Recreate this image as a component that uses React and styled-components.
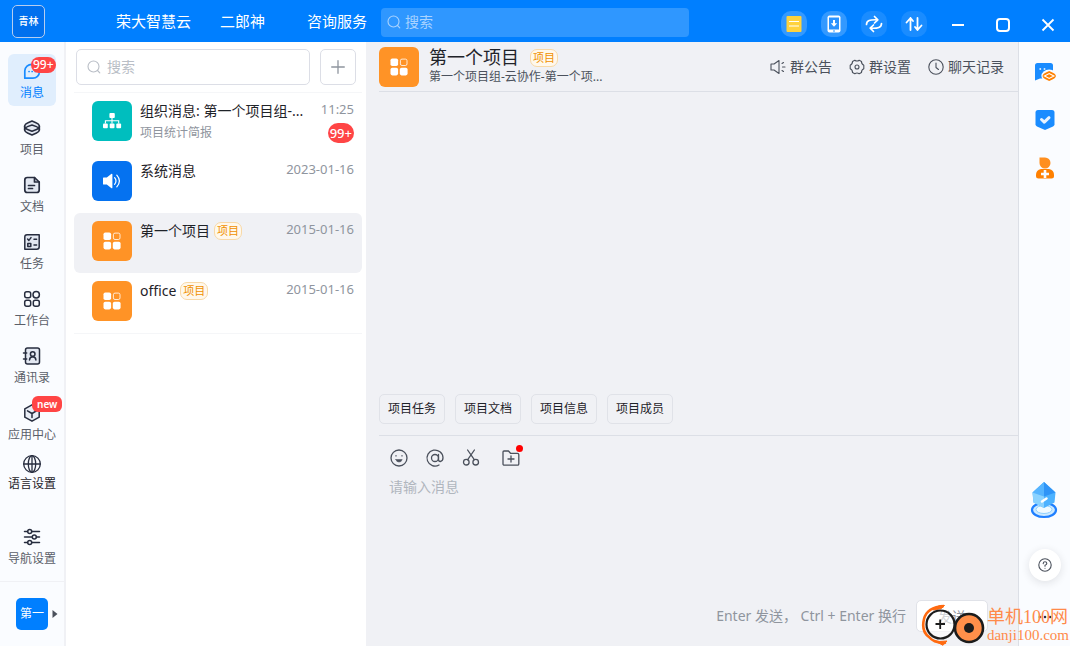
import React, { useState } from 'react';
import styled, { createGlobalStyle } from 'styled-components';

const GlobalStyle = createGlobalStyle`
    * {
        box-sizing: border-box;
    }
    body {
        margin: 0;
        overflow: hidden;
        font-family: "Noto Sans", "Noto Sans CJK SC", sans-serif;
        font-size: 14px;
        color: #1f2329;
    }
    button, input, textarea {
        font-family: inherit;
        margin: 0;
    }
    svg {
        display: block;
        flex-shrink: 0;
    }
`;

const Page = styled.div`
    display: flex;
    flex-direction: column;
    height: 100vh;
    background-color: #f0f1f5;
`;

/* top bar */

const Header = styled.header`
    display: flex;
    align-items: center;
    height: 42px;
    flex-shrink: 0;
    padding-left: 12px;
    background-color: #007fff;
`;

const Logo = styled.div`
    display: flex;
    align-items: center;
    justify-content: center;
    width: 33px;
    height: 33px;
    margin-right: 71px;
    border: 1px solid #b5cdf0;
    border-radius: 5px;
    background-color: #0070ee;
    color: white;
    font-size: 10px;
    font-weight: 500;
    line-height: 14px;
`;

const HeaderNav = styled.nav`
    display: flex;
    gap: 29px;
    margin-right: 42px;
`;

const HeaderLink = styled.a`
    color: white;
    font-size: 15px;
    line-height: 20px;
    text-decoration: none;
    white-space: nowrap;
`;

const HeaderSearch = styled.label`
    display: flex;
    align-items: center;
    gap: 4px;
    flex: 0 1 308px;
    height: 29px;
    margin: 2px auto 0 14px;
    padding: 0 6px;
    border-radius: 4px;
    background-color: #2f97ff;
    color: #a9d3ff;
`;

const SearchInput = styled.input`
    flex: 1;
    min-width: 0;
    padding: 0;
    border: none;
    outline: none;
    background-color: transparent;
    color: inherit;
    font-size: 14px;
    line-height: 20px;
    &::placeholder {
        color: inherit;
        opacity: 1;
    }
`;

const HeaderTools = styled.div`
    display: flex;
    gap: 14px;
    margin: 6px 8px 0 0;
`;

const RoundBtn = styled.button`
    display: flex;
    align-items: center;
    justify-content: center;
    width: 26px;
    height: 26px;
    padding: 0;
    border: none;
    border-radius: 10px;
    cursor: pointer;
    background-color: ${props => props.$bright ? '#3399ff' : '#1a8cff'};
`;

const WindowBtn = styled.button`
    display: flex;
    align-items: center;
    justify-content: center;
    width: 45px;
    height: 26px;
    margin-top: 8px;
    padding: 0;
    border: none;
    cursor: pointer;
    background-color: transparent;
`;

const Body = styled.div`
    display: flex;
    flex: 1;
    min-height: 0;
`;

/* left rail */

const Rail = styled.nav`
    display: flex;
    flex-direction: column;
    align-items: center;
    width: 66px;
    flex-shrink: 0;
    padding-top: 12px;
    border-right: 2px solid #f0f1f5;
    background-color: #fafcff;
`;

const RailGroup = styled.div`
    display: flex;
    flex-direction: column;
    gap: 5px;
`;

const RailItem = styled.button`
    position: relative;
    display: flex;
    flex-direction: column;
    align-items: center;
    gap: ${props => props.$compact ? '1px' : '3px'};
    width: 48px;
    height: 52px;
    padding: ${props => props.$compact ? '6px' : '7px'} 0 0;
    border: none;
    border-radius: 6px;
    cursor: pointer;
    font-size: 12px;
    line-height: 18px;
    white-space: nowrap;
    background-color: ${props => props.$active ? '#e0eefd' : 'transparent'};
    color: ${props => props.$active ? '#007fff' : props.$compact ? '#1f2329' : '#5a5f69'};
    svg {
        color: ${props => props.$active ? '#1a8cff' : '#272d3f'};
    }
`;

const RailSpacer = styled.div`
    flex: 1;
`;

const Badge = styled.span`
    padding: 0 2px;
    border-radius: 10px;
    background-color: #ff4545;
    color: white;
    font-size: 12px;
    font-weight: 500;
    line-height: 16px;
`;

const RailBadge = styled(Badge)`
    position: absolute;
    top: 3px;
    left: 23px;
`;

const NewBadge = styled(Badge)`
    position: absolute;
    top: 0;
    left: 24px;
    padding: 0 5px;
    border-radius: 6px;
    font-size: 10px;
    font-weight: 600;
`;

const RailFooter = styled.div`
    display: flex;
    align-items: center;
    gap: 4px;
    width: 100%;
    margin-top: 9px;
    padding: 16px 0 16px 16px;
    border-top: 1px solid #f0f1f5;
`;

const UserBtn = styled.button`
    width: 32px;
    height: 32px;
    padding: 0;
    border: none;
    border-radius: 5px;
    background-color: #007fff;
    color: white;
    font-size: 12px;
    line-height: 18px;
`;

/* conversation list */

const ListPanel = styled.section`
    display: flex;
    flex-direction: column;
    width: 300px;
    flex-shrink: 0;
    padding: 7px 4px 0 8px;
    background-color: white;
`;

const ListTop = styled.div`
    display: flex;
    gap: 10px;
    padding: 0 6px 7px 2px;
    border-bottom: 1px solid #f5f6f8;
`;

const ListSearch = styled.label`
    display: flex;
    align-items: center;
    gap: 6px;
    flex: 1;
    min-width: 0;
    height: 36px;
    padding: 0 10px;
    border: 1px solid #dcdee6;
    border-radius: 5px;
    color: #b9bec6;
`;

const AddBtn = styled.button`
    display: flex;
    align-items: center;
    justify-content: center;
    width: 36px;
    height: 36px;
    flex-shrink: 0;
    padding: 0;
    border: 1px solid #dcdee6;
    border-radius: 5px;
    background-color: white;
    color: #8f959e;
`;

const ChatList = styled.ul`
    margin: 0;
    padding: 0;
    list-style: none;
    border-bottom: 1px solid #f5f6f8;
`;

const ChatRow = styled.li`
    display: flex;
    gap: 8px;
    height: 60px;
    padding: 8px 8px 0 18px;
    border-radius: 6px;
    background-color: ${props => props.$active ? '#f0f1f5' : 'transparent'};
`;

const Avatar = styled.div`
    display: flex;
    align-items: center;
    justify-content: center;
    width: 40px;
    height: 40px;
    flex-shrink: 0;
    border-radius: 6px;
    color: white;
    background-color: ${props => props.$color};
`;

const ChatInfo = styled.div`
    flex: 1;
    min-width: 0;
`;

const ChatTitle = styled.div`
    display: flex;
    align-items: center;
    gap: 4px;
    height: 20px;
    line-height: 20px;
    white-space: nowrap;
`;

const ChatDesc = styled.div`
    margin-top: 2px;
    color: #8f959e;
    font-size: 12px;
    line-height: 20px;
`;

const ChatMeta = styled.div`
    display: flex;
    flex-direction: column;
    align-items: flex-end;
    gap: 6px;
    color: #8f959e;
    font-size: 13px;
    line-height: 16px;
`;

const CountBadge = styled(Badge)`
    font-size: 13px;
    line-height: 20px;
`;

const Tag = styled.span`
    flex-shrink: 0;
    padding: 0 2px;
    border: 1px solid #f8d9a8;
    border-radius: 7px;
    background-color: #fff8ec;
    color: #f09000;
    font-size: 11px;
    line-height: 16px;
`;

/* chat */

const Chat = styled.main`
    display: flex;
    flex-direction: column;
    flex: 1;
    min-width: 0;
    padding-left: 13px;
    border-right: 1px solid #dcdfe6;
`;

const ChatHeader = styled.div`
    display: flex;
    gap: 10px;
    height: 50px;
    flex-shrink: 0;
    padding: 5px 14px 0 0;
    border-bottom: 1px solid #dcdfe6;
`;

const ChatHeading = styled.div`
    flex: 1;
    min-width: 0;
`;

const ChatName = styled.h1`
    display: flex;
    align-items: center;
    gap: 11px;
    margin: 0;
    font-size: 18px;
    font-weight: normal;
    line-height: 21px;
    white-space: nowrap;
`;

const ChatPath = styled.div`
    color: #4b515c;
    font-size: 12px;
    line-height: 18px;
    white-space: nowrap;
`;

const ChatActions = styled.div`
    display: flex;
    align-items: center;
    gap: 17px;
    height: 40px;
`;

const TextBtn = styled.button`
    display: flex;
    align-items: center;
    gap: 4px;
    padding: 0;
    border: none;
    cursor: pointer;
    background-color: transparent;
    color: #4b515c;
    font-size: 14px;
    line-height: 20px;
    white-space: nowrap;
`;

const Messages = styled.div`
    flex: 1;
    min-height: 0;
`;

const QuickBar = styled.div`
    display: flex;
    gap: 10px;
    padding-bottom: 11px;
    border-bottom: 1px solid #dcdfe6;
`;

const QuickBtn = styled.button`
    height: 30px;
    padding: 0 8px;
    border: 1px solid #e0e2e8;
    border-radius: 5px;
    background-color: transparent;
    color: #1f2329;
    font-size: 12px;
    line-height: 18px;
`;

const Editor = styled.div`
    display: flex;
    flex-direction: column;
    height: 210px;
    padding: 12px 30px 14px 10px;
`;

const Toolbar = styled.div`
    display: flex;
    gap: 16px;
`;

const ToolBtn = styled.button`
    position: relative;
    padding: 0;
    border: none;
    background-color: transparent;
    color: #4b515c;
    &:last-child {
        margin-left: 4px;
    }
`;

const RedDot = styled.i`
    position: absolute;
    top: -3px;
    right: -2px;
    width: 7px;
    height: 7px;
    border-radius: 50%;
    background-color: #ff0000;
`;

const MessageInput = styled.textarea`
    flex: 1;
    margin-top: 9px;
    padding: 0;
    border: none;
    outline: none;
    resize: none;
    background-color: transparent;
    font-size: 14px;
    line-height: 20px;
    &::placeholder {
        color: #b0b6be;
        opacity: 1;
    }
`;

const SendBar = styled.div`
    display: flex;
    align-items: center;
    justify-content: flex-end;
    gap: 10px;
    color: #8f959e;
    line-height: 20px;
`;

const SendBtn = styled.button`
    width: 72px;
    height: 32px;
    padding: 0;
    border: 1px solid #e0e2e8;
    border-radius: 5px;
    background-color: white;
    color: #8f959e;
    font-size: 14px;
`;

/* right app bar */

const AppBar = styled.aside`
    display: flex;
    flex-direction: column;
    align-items: center;
    width: 51px;
    flex-shrink: 0;
    padding-top: 18px;
    background-color: #fafcff;
`;

const AppBtn = styled.button`
    margin-bottom: 24px;
    padding: 0;
    border: none;
    background-color: transparent;
`;

const CubeBtn = styled(AppBtn)`
    margin: auto 0 29px;
`;

const HelpBtn = styled.button`
    display: flex;
    align-items: center;
    justify-content: center;
    width: 32px;
    height: 32px;
    margin-bottom: 28px;
    padding: 0;
    border: none;
    border-radius: 50%;
    background-color: white;
    box-shadow: 0 2px 8px rgba(31, 35, 41, 0.12);
    color: #4b515c;
`;

const MoreBtn = styled(AppBtn)`
    margin-bottom: 21px;
    color: #272d3f;
`;

const SiteMark = styled.div`
    position: absolute;
    right: 1px;
    bottom: 0;
    display: flex;
    align-items: center;
    color: #ff8a4a;
    font-family: "Liberation Serif", "Noto Sans CJK SC", serif;
    pointer-events: none;
`;

const SiteText = styled.div`
    font-size: 18px;
    line-height: 20px;
`;

const SiteUrl = styled.div`
    font-size: 15px;
    line-height: 16px;
`;

const Icon = ({ size = 20, children, box = 20, width = 1.5 }) => (
    <svg width={size} height={size} viewBox={`0 0 ${box} ${box}`} fill="none" stroke="currentColor"
        strokeWidth={width} strokeLinecap="round" strokeLinejoin="round" aria-hidden="true">
        {children}
    </svg>
);

const SearchIcon = () => (
    <Icon size={14} box={14} width={1.1}>
        <circle cx="6.5" cy="6.5" r="5.5" />
        <path d="M10.5 10.5l2.3 2.3" />
    </Icon>
);

const GridIcon = () => (
    <svg width="18" height="18" viewBox="0 0 18 18" fill="currentColor" aria-hidden="true">
        <rect x="0.5" y="0.5" width="7.6" height="7.6" rx="1.8" />
        <rect x="0.5" y="9.8" width="7.6" height="7.6" rx="1.8" />
        <rect x="9.8" y="9.8" width="7.8" height="7.6" rx="1.8" />
        <rect x="10.4" y="1.1" width="6.6" height="6.4" rx="1.6" fill="none" stroke="currentColor" strokeWidth="0.8" />
    </svg>
);

const OrgIcon = () => (
    <svg width="20" height="18" viewBox="0 0 20 18" fill="currentColor" aria-hidden="true">
        <rect x="7.4" y="1" width="5.4" height="5" rx="1" />
        <rect x="1" y="11.4" width="4.8" height="4.8" rx="1" />
        <rect x="7.7" y="11.4" width="4.8" height="4.8" rx="1" />
        <rect x="14.3" y="11.4" width="4.8" height="4.8" rx="1" />
        <path d="M10 6v5.5M3.4 11.5V8.8h13.3v2.7" fill="none" stroke="currentColor" strokeWidth="1.1" />
    </svg>
);

const SoundIcon = () => (
    <svg width="20" height="18" viewBox="0 0 20 18" fill="currentColor" aria-hidden="true">
        <path d="M1.6 5.5h3.2L9.2 2q1.2-.8 1.2.6v12.8q0 1.4-1.2.6L4.8 12.500H1.6Q1 12.500 1 11.900V6.100q0-.6.6-.6z" />
        <path d="M12.600 5.700q2.800 3.300 0 6.600M14.800 3.200q5.200 5.800 0 11.600" fill="none" stroke="currentColor" strokeWidth="1.200" strokeLinecap="round" />
    </svg>
);

const railItems = [
    {
        name: '消息', badge: '99+',
        icon: <Icon width={1.7}><path d="M2.8 17.200V9.800a7 7 0 0 1 7-6.500h.6a7 7 0 0 1 7 6.500v.9a6.500 6.500 0 0 1-6.500 6.500z" /><path d="M7 10.500h.1M10.100 10.500h.1M13.200 10.500h.1" /></Icon>,
    },
    {
        name: '项目',
        icon: <Icon><path d="M2.600 8Q3 6 5.500 5L10 3l4.500 2Q17 6 17.400 8v4Q17 14 14.500 15L10 17l-4.500-2Q3 14 2.600 12z" fill="#e3e8f2" /><path d="M2.600 8.500Q3 10.500 5.500 11.500L10 13.300l4.500-1.800Q17 10.500 17.400 8.500M2.600 11.500Q3 9.500 5.500 8.600L10 7l4.500 1.600Q17 9.500 17.400 11.500" /></Icon>,
    },
    {
        name: '文档',
        icon: <Icon width={1.7}><path d="M12.500 2.500H5.300Q2.800 2.500 2.800 5v10q0 2.500 2.500 2.500h9.400q2.500 0 2.500-2.500V7z" fill="#e3e8f2" /><path d="M12.500 2.500V7h4.700M6.500 10.500h6M6.500 13.500h4" /></Icon>,
    },
    {
        name: '任务',
        icon: <Icon><path d="M5 2.800h12.200v12q0 2.500-2.500 2.500H2.800V5q0-2.200 2.200-2.200z" fill="#e3e8f2" /><path d="M5.600 7l1.300 1.400L9 5.600M12 7.300h2.600M12 13h2.600" /><rect x="5.800" y="11.400" width="3" height="3" /></Icon>,
    },
    {
        name: '工作台',
        icon: <Icon><rect x="2.700" y="2.700" width="6" height="6" rx="2" /><circle cx="14.200" cy="5.700" r="3.200" /><rect x="2.700" y="11.300" width="6" height="6" rx="2" /><rect x="11.300" y="11.300" width="6" height="6" rx="2" /></Icon>,
    },
    {
        name: '通讯录',
        icon: <Icon><rect x="3.500" y="2" width="14" height="16" rx="2" fill="#e3e8f2" /><path d="M1.500 7h3.200M1.500 13h3.200" /><circle cx="10.700" cy="8" r="2.300" /><path d="M7.500 14q.2-3 3.200-3.200 3 .2 3.200 3.200" /></Icon>,
    },
    {
        name: '应用中心', isNew: true,
        icon: <Icon><path d="M10 1.800l7.200 4v8.400l-7.200 4-7.200-4V5.800z" fill="#e9edf5" /><path d="M5.500 7.800l4.500 2.700 4.500-2.700M10 10.500v4" /></Icon>,
    },
];

const chats = [
    { title: '组织消息: 第一个项目组-...', desc: '项目统计简报', time: '11:25', count: '99+', color: '#00bebe', icon: <OrgIcon /> },
    { title: '系统消息', time: '2023-01-16', color: '#0572f0', icon: <SoundIcon /> },
    { title: '第一个项目', tag: '项目', time: '2015-01-16', color: '#ff9326', icon: <GridIcon /> },
    { title: 'office', tag: '项目', time: '2015-01-16', color: '#ff9326', icon: <GridIcon /> },
];

const quickLinks = ['项目任务', '项目文档', '项目信息', '项目成员'];

const TopBar = () => (
    <Header>
        <Logo>青林</Logo>
        <HeaderNav>
            <HeaderLink href="#cloud">荣大智慧云</HeaderLink>
            <HeaderLink href="#erlang">二郎神</HeaderLink>
        </HeaderNav>
        <HeaderLink href="#service">咨询服务</HeaderLink>
        <HeaderSearch>
            <SearchIcon />
            <SearchInput placeholder="搜索" aria-label="搜索" />
        </HeaderSearch>
        <HeaderTools>
            <RoundBtn $bright aria-label="便签">
                <svg width="16" height="18" viewBox="0 0 16 18">
                    <rect x="0.500" y="1" width="15" height="16" rx="1" fill="#ffd23d" />
                    <path d="M3 6.500h10M3 11h10" stroke="white" strokeWidth="1.200" />
                </svg>
            </RoundBtn>
            <RoundBtn $bright aria-label="手机">
                <svg width="14" height="18" viewBox="0 0 14 18">
                    <rect x="0.500" y="0.500" width="13" height="17" rx="2" fill="white" />
                    <rect x="2" y="2.500" width="10" height="12" fill="#2b93ff" />
                    <path d="M7 5v4" fill="none" stroke="white" strokeWidth="2" />
                    <path d="M3.800 8.300h6.400L7 11.800z" fill="white" />
                    <path d="M6 16h2" stroke="#2b93ff" />
                </svg>
            </RoundBtn>
            <RoundBtn aria-label="同步">
                <svg width="18" height="18" viewBox="0 0 18 18" fill="none" stroke="white" strokeWidth="1.700" strokeLinecap="round" strokeLinejoin="round">
                    <path d="M1.500 9.500C1.500 5.500 5 4.500 12 4.800M9.500 1.500l3.300 3.300-3.300 3.200" />
                    <path d="M16.500 8.500c0 4-3.500 5-10.500 4.700M8.500 10l-3.300 3.200 3.300 3.300" />
                </svg>
            </RoundBtn>
            <RoundBtn aria-label="传输">
                <svg width="18" height="16" viewBox="0 0 18 16" fill="none" stroke="white" strokeWidth="1.800" strokeLinecap="round" strokeLinejoin="round">
                    <path d="M5.500 14V2L1.500 6.500M5.500 2l2.500 3M12.500 2v12l4-4.500M12.500 14L10 11" />
                </svg>
            </RoundBtn>
        </HeaderTools>
        <WindowBtn aria-label="最小化">
            <svg width="14" height="14" viewBox="0 0 14 14"><path d="M1 7h12" stroke="white" strokeWidth="2" /></svg>
        </WindowBtn>
        <WindowBtn aria-label="最大化">
            <svg width="14" height="14" viewBox="0 0 14 14"><rect x="1" y="1" width="12" height="12" rx="3" fill="none" stroke="white" strokeWidth="2" /></svg>
        </WindowBtn>
        <WindowBtn aria-label="关闭">
            <svg width="14" height="14" viewBox="0 0 14 14"><path d="M1.500 1.500l11 11M12.500 1.500l-11 11" stroke="white" strokeWidth="1.800" /></svg>
        </WindowBtn>
    </Header>
);

const SideRail = () => {
    const [active, setActive] = useState('消息');
    return (
        <Rail>
            <RailGroup>
                {railItems.map(item => (
                    <RailItem key={item.name} $active={active === item.name} onClick={() => setActive(item.name)}>
                        {item.icon}
                        {item.name}
                        {item.badge && <RailBadge>{item.badge}</RailBadge>}
                        {item.isNew && <NewBadge>new</NewBadge>}
                    </RailItem>
                ))}
            </RailGroup>
            <RailItem $compact>
                <Icon width={1.300}>
                    <circle cx="10" cy="10" r="8.300" />
                    <ellipse cx="10" cy="10" rx="3.700" ry="8.300" />
                    <path d="M1.700 10h16.600M10 1.700v16.600" />
                </Icon>
                语言设置
            </RailItem>
            <RailSpacer />
            <RailItem>
                <Icon>
                    <path d="M2.500 4.500h3M10 4.500h7.500M2.500 10h7.500M14.500 10h3M2.500 15.500h3M10 15.500h7.500" />
                    <circle cx="7.700" cy="4.500" r="2" />
                    <circle cx="12.300" cy="10" r="2" />
                    <circle cx="7.700" cy="15.500" r="2" />
                </Icon>
                导航设置
            </RailItem>
            <RailFooter>
                <UserBtn>第一</UserBtn>
                <svg width="6" height="8" viewBox="0 0 6 8"><path d="M0.500 0L5.500 4l-5 4z" fill="#4b515c" /></svg>
            </RailFooter>
        </Rail>
    );
};

const Conversations = () => {
    const [current, setCurrent] = useState(2);
    return (
        <ListPanel>
            <ListTop>
                <ListSearch>
                    <SearchIcon />
                    <SearchInput placeholder="搜索" aria-label="搜索会话" />
                </ListSearch>
                <AddBtn aria-label="新建">
                    <Icon size={14} box={14} width={1.300}><path d="M7 0.700v12.600M0.700 7h12.600" /></Icon>
                </AddBtn>
            </ListTop>
            <ChatList>
                {chats.map((chat, i) => (
                    <ChatRow key={chat.title} $active={current === i} onClick={() => setCurrent(i)}>
                        <Avatar $color={chat.color}>{chat.icon}</Avatar>
                        <ChatInfo>
                            <ChatTitle>
                                <span>{chat.title}</span>
                                {chat.tag && <Tag>{chat.tag}</Tag>}
                            </ChatTitle>
                            {chat.desc && <ChatDesc>{chat.desc}</ChatDesc>}
                        </ChatInfo>
                        <ChatMeta>
                            <span>{chat.time}</span>
                            {chat.count && <CountBadge>{chat.count}</CountBadge>}
                        </ChatMeta>
                    </ChatRow>
                ))}
            </ChatList>
        </ListPanel>
    );
};

const ChatPanel = () => (
    <Chat>
        <ChatHeader>
            <Avatar $color="#ff9326"><GridIcon /></Avatar>
            <ChatHeading>
                <ChatName>第一个项目<Tag>项目</Tag></ChatName>
                <ChatPath>第一个项目组-云协作-第一个项...</ChatPath>
            </ChatHeading>
            <ChatActions>
                <TextBtn>
                    <Icon size={16} box={16} width={1.100}>
                        <path d="M1 5h3l5-3.500v13L4 11H1zM12 4.500l1.500-1M12.500 8H15M12 11.500l1.500 1" />
                    </Icon>
                    群公告
                </TextBtn>
                <TextBtn>
                    <Icon size={16} box={16} width={1.100}>
                        <path d="M5.800 1.200Q8 2.800 10.200 1.200L12.500 2.500Q12.300 5 14.800 6.200v3.600Q12.300 11 12.500 13.500l-2.300 1.300Q8 13.200 5.800 14.800L3.500 13.500Q3.700 11 1.200 9.800V6.200Q3.700 5 3.500 2.500z" />
                        <circle cx="8" cy="8" r="2" />
                    </Icon>
                    群设置
                </TextBtn>
                <TextBtn>
                    <Icon size={16} box={16} width={1.100}>
                        <circle cx="8" cy="8" r="7.200" />
                        <path d="M8 4v4.500l2.500 2" />
                    </Icon>
                    聊天记录
                </TextBtn>
            </ChatActions>
        </ChatHeader>
        <Messages />
        <QuickBar>
            {quickLinks.map(name => <QuickBtn key={name}>{name}</QuickBtn>)}
        </QuickBar>
        <Editor>
            <Toolbar>
                <ToolBtn aria-label="表情">
                    <Icon width={1.300}>
                        <circle cx="10" cy="10" r="8" />
                        <path d="M6.800 7.800h.4M12.800 7.800h.4" />
                        <path d="M6.800 11.500h6.400q-.7 2.600-3.200 2.600t-3.200-2.600z" fill="currentColor" strokeWidth="0.500" />
                    </Icon>
                </ToolBtn>
                <ToolBtn aria-label="提及">
                    <Icon width={1.300}>
                        <circle cx="10" cy="10" r="3.500" />
                        <path d="M13.500 6.500v5q0 2 1.900 2 2.600-.5 2.600-3.700a8 8 0 1 0-4 7.200" />
                    </Icon>
                </ToolBtn>
                <ToolBtn aria-label="截图">
                    <Icon width={1.300}>
                        <circle cx="5.300" cy="14.200" r="2.800" />
                        <circle cx="14.700" cy="14.200" r="2.800" />
                        <path d="M6.600 2l6.700 9.700M13.400 2L6.700 11.700" />
                    </Icon>
                </ToolBtn>
                <ToolBtn aria-label="文件">
                    <Icon width={1.300}>
                        <path d="M3 3h4.500l2 2.300H16.500q1.300 0 1.300 1.300v9.300q0 1.300-1.300 1.300H3.300Q2 17.200 2 15.900V4q0-1 1-1z" />
                        <path d="M10 8v6M7 11h6" />
                    </Icon>
                    <RedDot />
                </ToolBtn>
            </Toolbar>
            <MessageInput placeholder="请输入消息" aria-label="消息" />
            <SendBar>
                <span>Enter 发送， Ctrl + Enter 换行</span>
                <SendBtn>发送</SendBtn>
            </SendBar>
        </Editor>
    </Chat>
);

const Apps = () => (
    <AppBar>
        <AppBtn aria-label="项目消息">
            <svg width="24" height="24" viewBox="0 0 24 24">
                <path d="M2 20.500V5.500Q2 3 4.500 3h13Q20 3 20 5.500v11q0 2-2 2H7z" fill="#1a8cff" />
                <path d="M6.500 9h1.600M10.700 9h1.600" stroke="white" strokeWidth="1.600" />
                <ellipse cx="16.200" cy="16" rx="7.800" ry="6.500" fill="#fafcff" />
                <path d="M9.500 16Q10 13.500 12.500 12.800L16.200 11l3.700 1.800Q22.500 13.500 23 16q-.5 2.500-3.100 3.200L16.200 21l-3.700-1.800Q10 18.500 9.500 16z" fill="#ff8000" />
                <path d="M11.500 16l4.700-2.400 4.700 2.400-4.700 2.400z" fill="#ff8000" stroke="white" strokeWidth="1.100" />
            </svg>
        </AppBtn>
        <AppBtn aria-label="任务">
            <svg width="24" height="24" viewBox="0 0 24 24">
                <path d="M2.500 4.500q0-2.500 2.500-2.500h14q2.500 0 2.500 2.500v11.700q0 1.500-1.500 2.300l-8 3.500-8-3.500q-1.500-.8-1.500-2.300z" fill="#1a8cff" />
                <path d="M8.500 11.500l2.800 2.700 4.700-4.500" fill="none" stroke="#e8f3ff" strokeWidth="3" strokeLinecap="round" strokeLinejoin="round" />
            </svg>
        </AppBtn>
        <AppBtn aria-label="成员">
            <svg width="24" height="24" viewBox="0 0 24 24">
                <path d="M6.500 1.500h5.500a5.500 5.500 0 1 1-5.500 5.500z" fill="#ff8f1f" />
                <path d="M8 13h8q5 1 5 6v1q0 2.500-2.500 2.500h-13Q3 22.500 3 20v-1q0-5 5-6z" fill="#ff8000" />
                <path d="M12 14v8M8 18h8" stroke="#fafcff" strokeWidth="2.600" />
            </svg>
        </AppBtn>
        <CubeBtn aria-label="助手">
            <svg width="30" height="40" viewBox="0 0 30 40">
                <ellipse cx="14" cy="30" rx="12" ry="7" fill="#cdeaff" stroke="#1f7fff" strokeWidth="2.200" />
                <ellipse cx="14" cy="29.500" rx="8" ry="4" fill="#f0faff" stroke="#8fd0ff" />
                <path d="M14 2l11.500 10.500-1 10L14 28 3.500 22.500l-1-10z" fill="#4db2ff" />
                <path d="M14 2v14.500L2.500 12.500z" fill="#55b4ff" />
                <path d="M14 2l11.500 10.500L14 16.500z" fill="#2f94f7" />
                <path d="M2.500 12.500l11.500 4V28L3.500 22.500z" fill="#8ad2ff" />
                <path d="M12 21.500l4.500-3" stroke="white" strokeWidth="2.500" strokeLinecap="round" />
            </svg>
        </CubeBtn>
        <HelpBtn aria-label="帮助">
            <Icon size={14} box={14} width={1.100}>
                <circle cx="7" cy="7" r="6.200" />
                <path d="M5.200 5.600Q5.300 3.800 7 3.800t1.800 1.600Q8.800 6.400 7 7.300V8.200M7 10.200v.1" />
            </Icon>
        </HelpBtn>
        <MoreBtn aria-label="更多">
            <svg width="16" height="16" viewBox="0 0 16 16" fill="currentColor">
                <circle cx="3" cy="8" r="1.300" /><circle cx="8" cy="8" r="1.300" /><circle cx="13" cy="8" r="1.300" />
            </svg>
        </MoreBtn>
    </AppBar>
);

const Watermark = () => (
    <SiteMark>
        <svg width="66" height="42" viewBox="0 0 66 42">
            <path d="M23 2Q6 3 3 15T8 33q6 7 17 5.500" fill="none" stroke="#ff6a10" strokeWidth="2.600" />
            <path d="M12 6Q17 .5 23.500 1.500l-3 3z" fill="#ff6a10" stroke="#ff6a10" />
            <path d="M12 36q6 2.500 14 1l-4 4.300z" fill="#ff6a10" stroke="#ff6a10" />
            <circle cx="19.500" cy="20.500" r="14" fill="rgba(255,255,255,0.6)" stroke="#1c1c1c" strokeWidth="2.200" />
            <path d="M14.500 20h9.500M19.200 15.500v9.500" stroke="#1c1c1c" strokeWidth="1.800" />
            <circle cx="48" cy="24" r="14" fill="#ff8f4a" stroke="#1c1c1c" strokeWidth="2.600" />
            <circle cx="48" cy="24" r="5" fill="#1c1c1c" />
        </svg>
        <div>
            <SiteText>单机100网</SiteText>
            <SiteUrl>danji100.com</SiteUrl>
        </div>
    </SiteMark>
);

const App = () => (
    <Page>
        <GlobalStyle />
        <TopBar />
        <Body>
            <SideRail />
            <Conversations />
            <ChatPanel />
            <Apps />
        </Body>
        <Watermark />
    </Page>
);

export default App;
